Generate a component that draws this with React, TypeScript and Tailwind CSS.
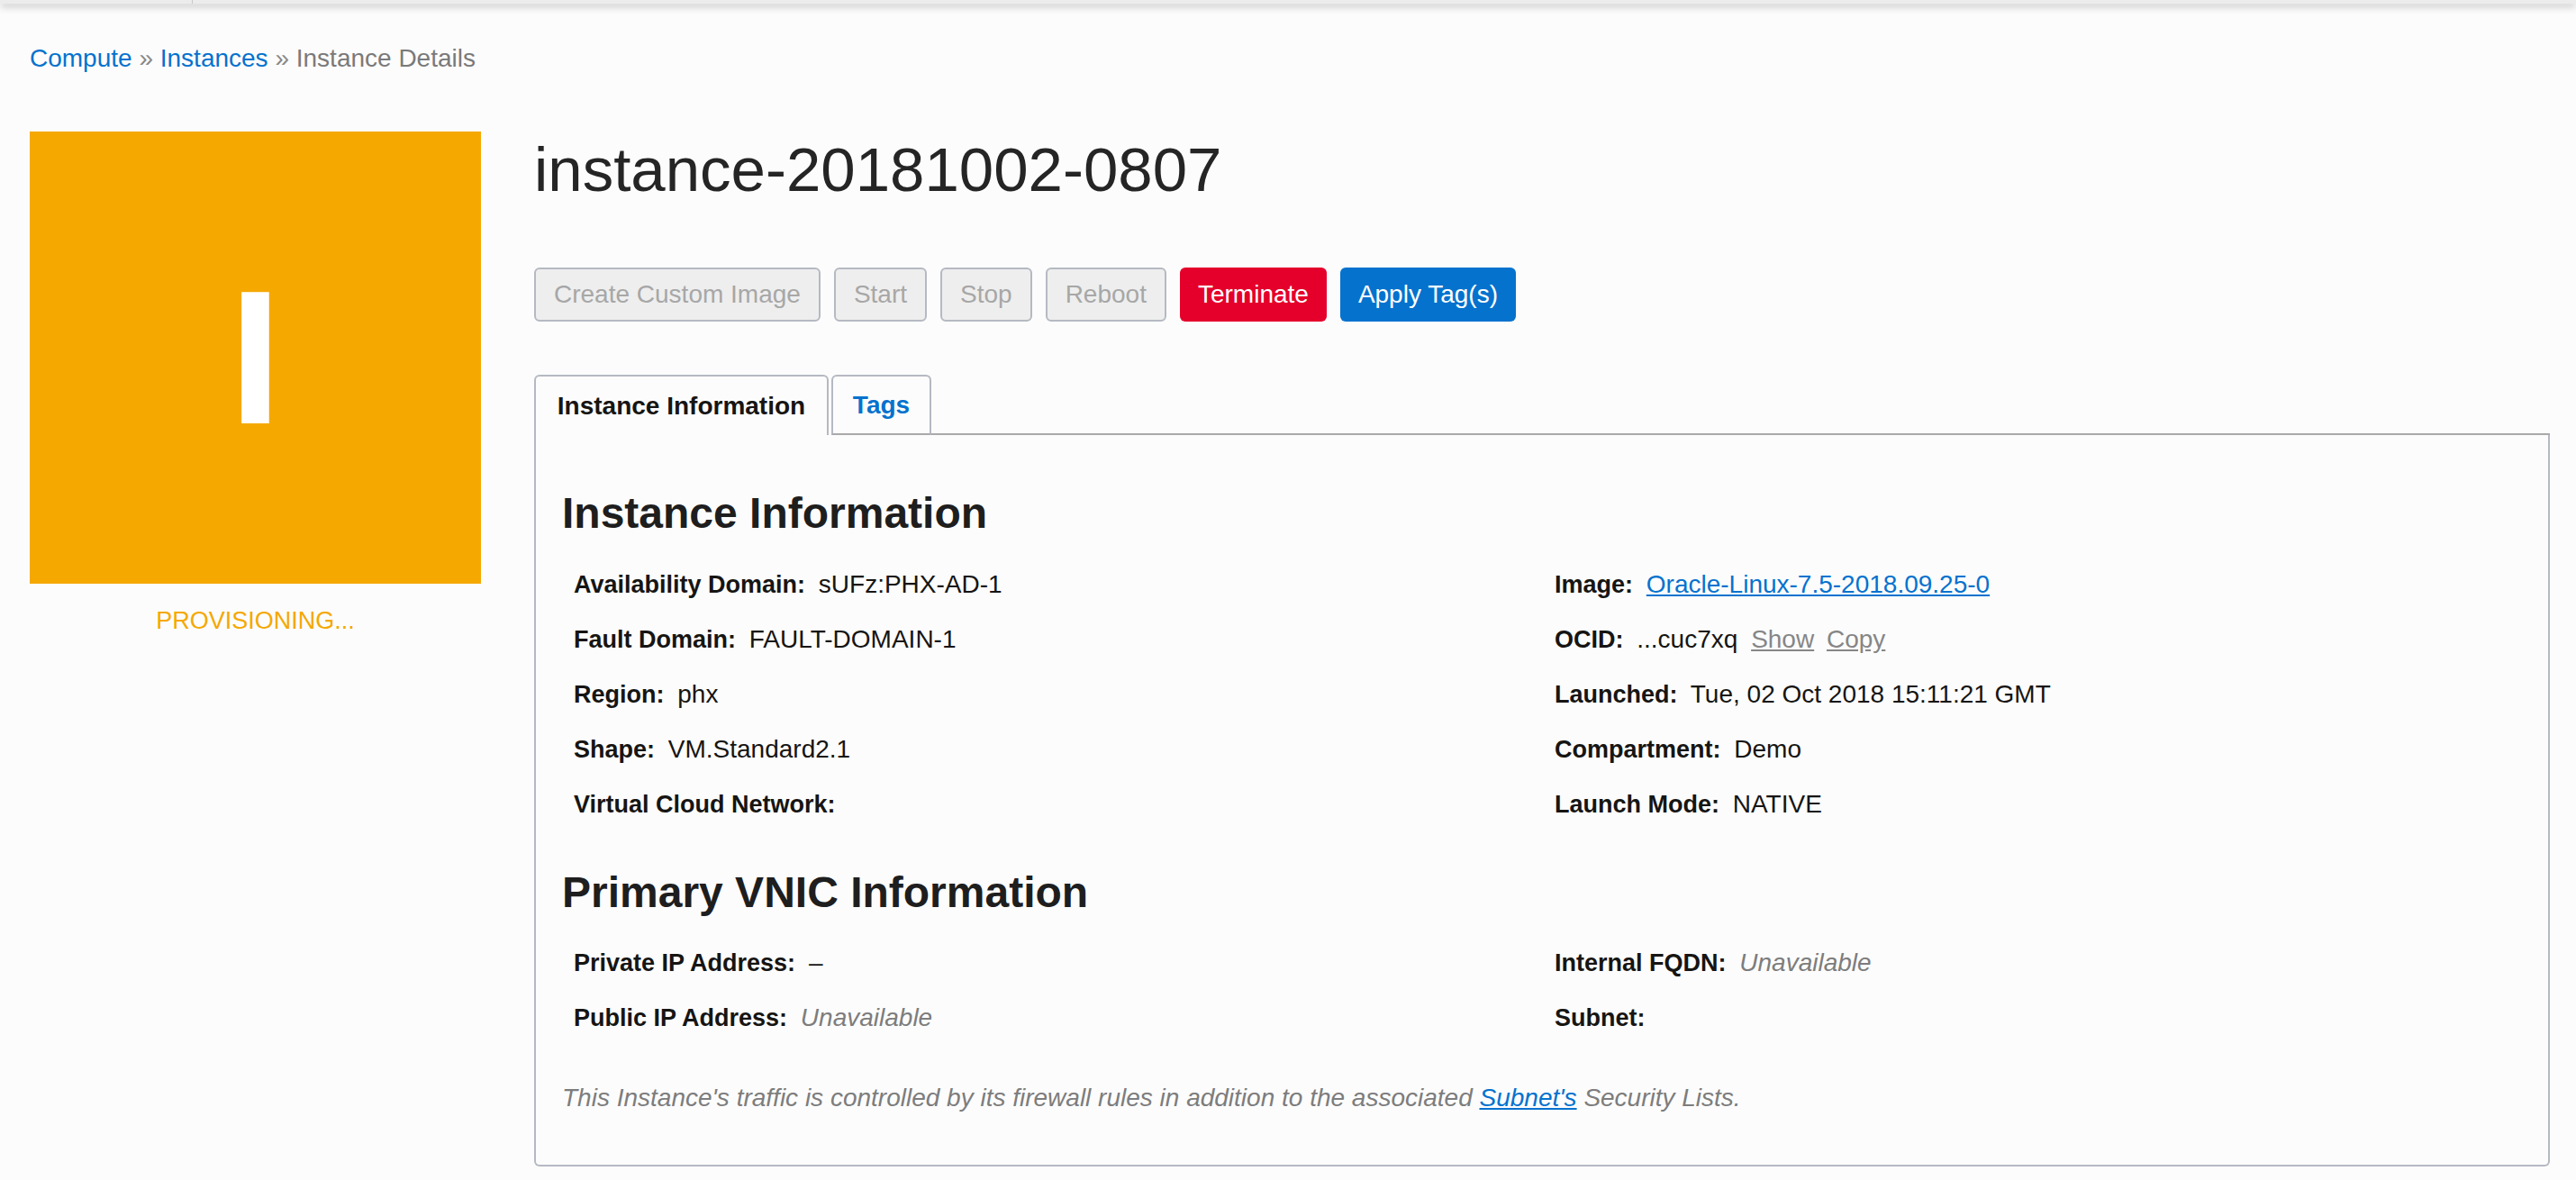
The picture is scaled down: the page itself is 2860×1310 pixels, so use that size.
import React from "react";

const leftRows = [
  { label: "Availability Domain:", value: "sUFz:PHX-AD-1" },
  { label: "Fault Domain:", value: "FAULT-DOMAIN-1" },
  { label: "Region:", value: "phx" },
  { label: "Shape:", value: "VM.Standard2.1" },
  { label: "Virtual Cloud Network:", value: "" },
];

const Row = ({
  label,
  children,
}: {
  label: string;
  children?: React.ReactNode;
}) => (
  <div className="h-[61px] leading-[61px] whitespace-nowrap">
    <span className="font-bold text-[27px] text-[#161513] mr-[7px]">
      {label}
    </span>{" "}
    {children}
  </div>
);

const Unavailable = () => (
  <span className="italic text-[#7d7d7d]">Unavailable</span>
);

const App = () => {
  return (
    <div className="min-h-screen bg-[#fcfcfc] font-['Liberation_Sans',Arial,sans-serif] text-[#161513]">
      {/* top strip */}
      <div className="h-[4px] bg-[#ececec] shadow-[0_3px_8px_rgba(0,0,0,0.3)] flex">
        <div className="w-[214px] border-r border-[#c8c8c8]" />
      </div>

      <nav className="pl-[33px] pt-[41px] text-[28px] leading-[40px] text-[#7a7a7a]">
        <a href="#" className="text-[#0572ce]">
          Compute
        </a>{" "}
        <span className="text-[#888]">»</span>{" "}
        <a href="#" className="text-[#0572ce]">
          Instances
        </a>{" "}
        <span className="text-[#888]">»</span> Instance Details
      </nav>

      <div className="flex pl-[33px] pr-[29px] gap-[59px] mt-[61px]">
        {/* status tile */}
        <div className="w-[501px] shrink-0">
          <div className="h-[502px] bg-[#f5a800] flex items-center justify-center">
            <span className="text-white font-bold text-[212px] leading-none">
              I
            </span>
          </div>
          <div className="mt-[21px] text-center text-[27px] leading-[40px] text-[#f5a800]">
            PROVISIONING...
          </div>
        </div>

        {/* main */}
        <div className="flex-1 min-w-0">
          <h1 className="mt-[8px] text-[69px] leading-none text-[#252525]">
            instance-20181002-0807
          </h1>

          <div className="mt-[74px] flex gap-[15px] text-[28px]">
            {["Create Custom Image", "Start", "Stop", "Reboot"].map((b) => (
              <button
                key={b}
                disabled
                className="h-[60px] px-[20px] rounded-[6px] border-2 border-[#b5b9c2] bg-[#eeeeee] text-[#a7a7a7]"
              >
                {b}
              </button>
            ))}
            <button className="h-[60px] px-[20px] rounded-[6px] bg-[#e4002b] text-white">
              Terminate
            </button>
            <button className="h-[60px] px-[20px] rounded-[6px] bg-[#0572ce] text-white">
              Apply Tag(s)
            </button>
          </div>

          {/* tabs */}
          <div className="mt-[59px] flex items-stretch h-[67px] text-[28px] font-bold">
            <div className="w-[327px] flex items-center justify-center border-2 border-b-0 border-[#b5b9c2] rounded-t-[6px] text-[#161513]">
              Instance Information
            </div>
            <div className="ml-[3px] w-[111px] flex items-center justify-center border-2 border-[#b5b9c2] border-b-[#a9a9a9] rounded-t-[6px] text-[#0572ce]">
              Tags
            </div>
            <div className="flex-1 border-b-2 border-[#a9a9a9]" />
          </div>

          <div className="border-2 border-t-0 border-[#b5b9c2] rounded-b-[6px] pl-[29px] pr-[14px] pt-[63px] pb-[44px] text-[28px]">
            <h2 className="text-[48px] leading-none font-bold text-[#1e1e1e]">
              Instance Information
            </h2>
            <div className="ml-[13px] mt-[24px] grid grid-cols-2">
              <div>
                {leftRows.map((r) => (
                  <Row key={r.label} label={r.label}>
                    {r.value}
                  </Row>
                ))}
              </div>
              <div>
                <Row label="Image:">
                  <a href="#" className="text-[#0572ce] underline">
                    Oracle-Linux-7.5-2018.09.25-0
                  </a>
                </Row>
                <Row label="OCID:">
                  ...cuc7xq{" "}
                  <a href="#" className="ml-[7px] text-[#868686] underline">
                    Show
                  </a>{" "}
                  <a href="#" className="ml-[6px] text-[#868686] underline">
                    Copy
                  </a>
                </Row>
                <Row label="Launched:">Tue, 02 Oct 2018 15:11:21 GMT</Row>
                <Row label="Compartment:">Demo</Row>
                <Row label="Launch Mode:">NATIVE</Row>
              </div>
            </div>

            <h2 className="mt-[44px] text-[48px] leading-none font-bold text-[#1e1e1e]">
              Primary VNIC Information
            </h2>
            <div className="ml-[13px] mt-[23px] grid grid-cols-2">
              <div>
                <Row label="Private IP Address:">–</Row>
                <Row label="Public IP Address:">
                  <Unavailable />
                </Row>
              </div>
              <div>
                <Row label="Internal FQDN:">
                  <Unavailable />
                </Row>
                <Row label="Subnet:" />
              </div>
            </div>

            <p className="mt-[28px] leading-[61px] italic text-[#7d7d7d]">
              This Instance's traffic is controlled by its firewall rules in
              addition to the associated{" "}
              <a href="#" className="text-[#0572ce] underline">
                Subnet's
              </a>{" "}
              Security Lists.
            </p>
          </div>
        </div>
      </div>
    </div>
  );
};

export default App;
